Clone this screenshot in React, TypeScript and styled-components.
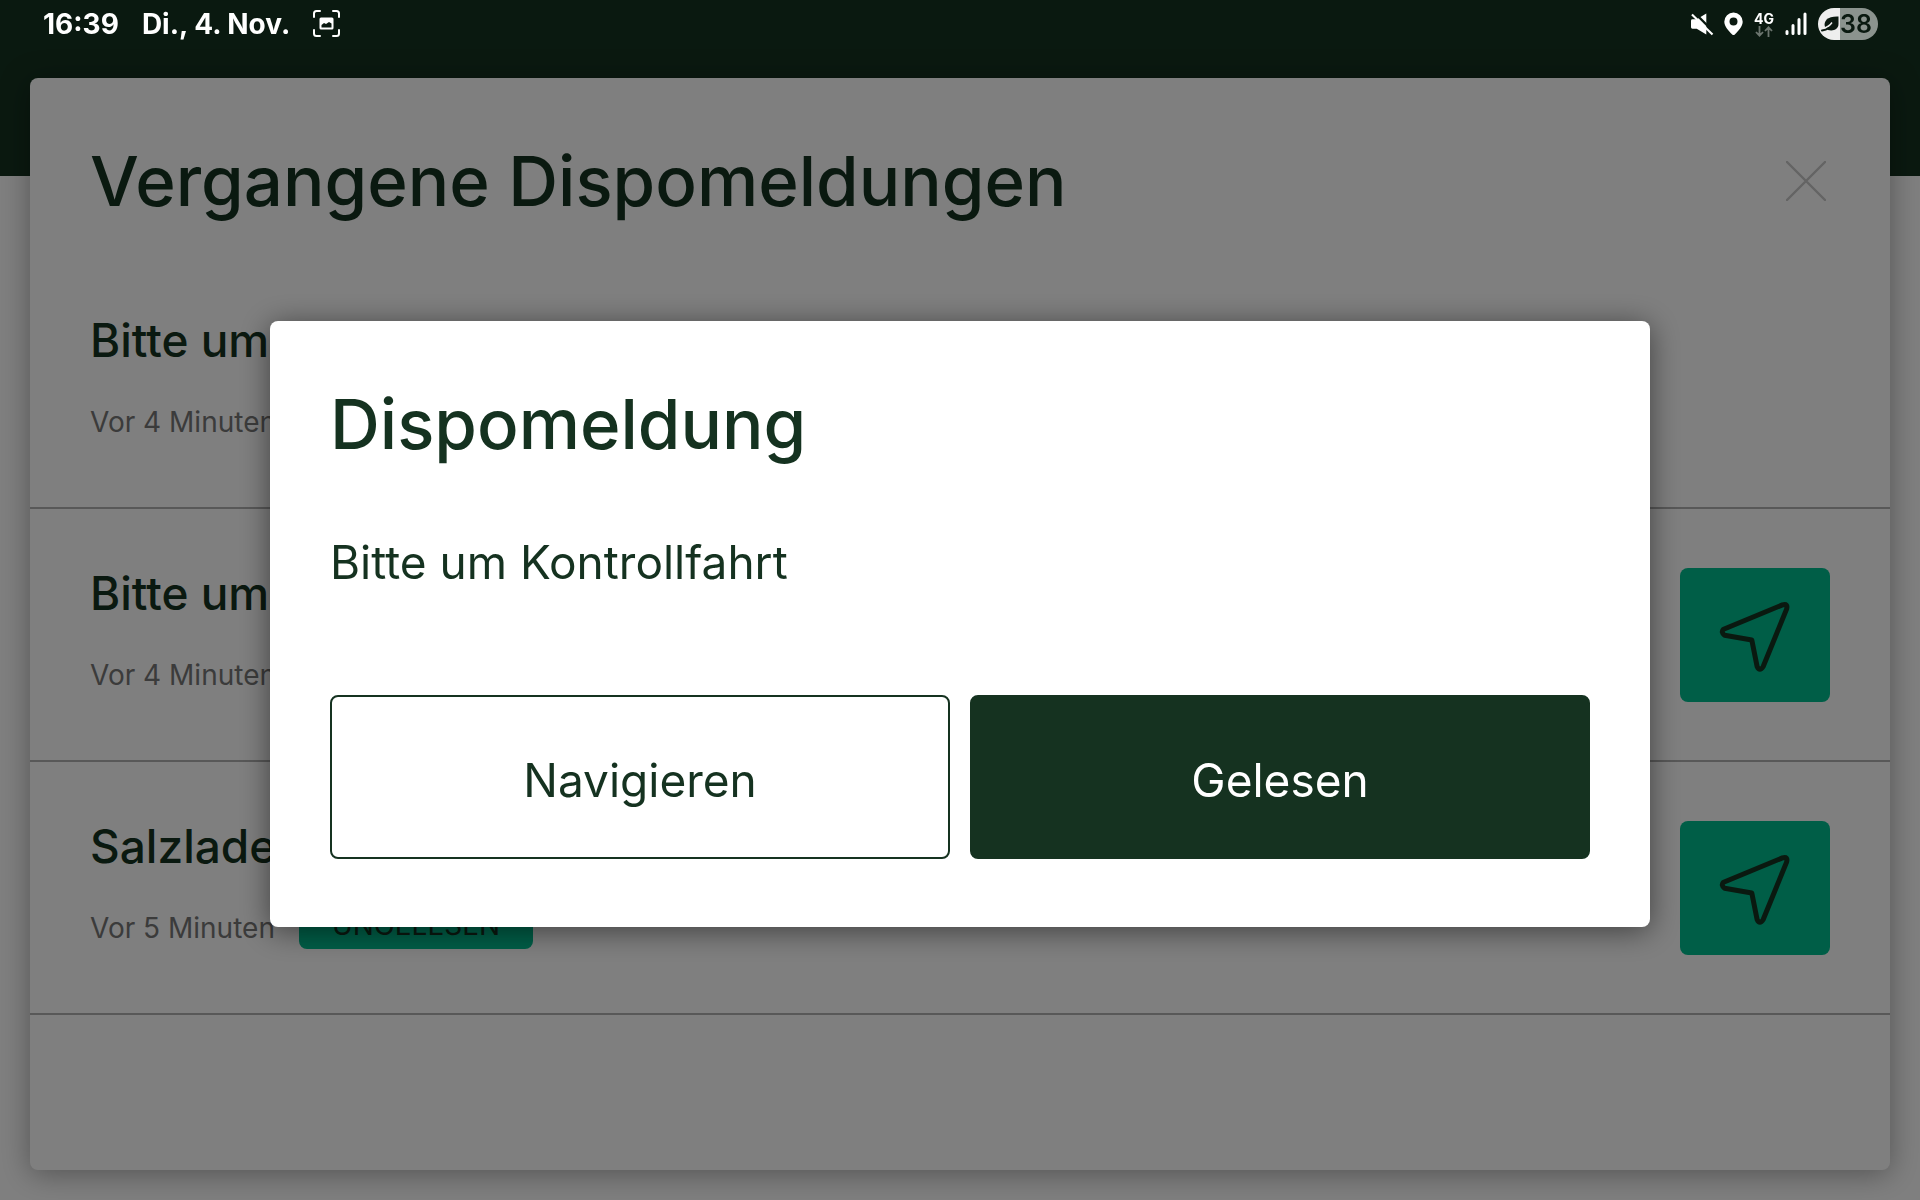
import React from "react";
import styled, { createGlobalStyle } from "styled-components";

const ink = "#153220";
const green = "#00bc8e";

const GlobalStyle = createGlobalStyle`
  *, *::before, *::after { box-sizing: border-box; }
  body {
    margin: 0;
    background: #ffffff;
    color: ${ink};
    font-family: Inter, Roboto, "Liberation Sans", sans-serif;
  }
  h1, h2, h3, p, ul { margin: 0; padding: 0; }
  button { font-family: inherit; color: inherit; cursor: pointer; }
`;

const Screen = styled.div`
  display: flex;
  flex-direction: column;
  min-height: 100vh;
  padding: 78px 30px 30px;
  background: linear-gradient(${ink} 176px, #ffffff 176px);
`;

const Panel = styled.main`
  flex: 1;
  background: #ffffff;
  border-radius: 8px;
  box-shadow: 0 4px 30px rgba(0, 0, 0, 0.35);
`;

const PanelHeader = styled.header`
  display: flex;
  align-items: center;
  justify-content: space-between;
  padding: 61px 60px 33px;
`;

const Title = styled.h1`
  font-size: 69px;
  line-height: 84px;
  font-weight: 500;
`;

const CloseButton = styled.button`
  display: flex;
  padding: 4px;
  border: 0;
  background: none;
  color: #c8c8c8;
`;

const List = styled.ul`
  list-style: none;
`;

const Row = styled.li`
  display: flex;
  align-items: center;
  justify-content: space-between;
  padding: 59px 60px 58px;
  border-bottom: 2px solid #b0b0b0;
`;

const RowText = styled.div`
  display: flex;
  flex-direction: column;
  gap: 30px;
`;

const RowTitle = styled.h2`
  font-size: 46px;
  line-height: 50px;
  font-weight: 500;
`;

const RowMeta = styled.div`
  display: flex;
  align-items: flex-start;
  gap: 24px;
  height: 54px;
`;

const Age = styled.p`
  padding-top: 9px;
  font-size: 28px;
  line-height: 36px;
  color: #777777;
`;

const Badge = styled.span`
  padding: 0 33px;
  border-radius: 8px;
  background: ${green};
  font-size: 28px;
  line-height: 48px;
`;

const NavigateButton = styled.button`
  display: flex;
  align-items: center;
  justify-content: center;
  width: 150px;
  height: 134px;
  border: 0;
  border-radius: 8px;
  background: ${green};
`;

const Overlay = styled.div`
  position: fixed;
  inset: 0;
  display: flex;
  align-items: center;
  justify-content: center;
  padding: 48px 270px 0;
  background: rgba(0, 0, 0, 0.5);
`;

const Dialog = styled.section`
  flex: 1;
  display: flex;
  flex-direction: column;
  padding: 61px 60px 68px;
  border-radius: 8px;
  background: #ffffff;
  box-shadow: 0 4px 30px rgba(0, 0, 0, 0.5);
`;

const Message = styled.p`
  padding: 65px 0 102px;
  font-size: 46px;
  line-height: 62px;
`;

const Actions = styled.div`
  display: flex;
  gap: 20px;
`;

const Action = styled.button<{ $filled?: boolean }>`
  flex: 1;
  height: 164px;
  padding: 6px 0 0;
  border: 2px solid ${ink};
  border-radius: 8px;
  background: ${(p) => (p.$filled ? ink : "#ffffff")};
  color: ${(p) => (p.$filled ? "#ffffff" : ink)};
  font-size: 46px;
  line-height: 56px;
`;

const StatusBar = styled.div`
  position: fixed;
  top: 0;
  left: 0;
  right: 0;
  display: flex;
  align-items: center;
  justify-content: space-between;
  height: 48px;
  padding: 0 42px 0 43px;
  color: #ffffff;
`;

const StatusGroup = styled.div<{ $gap: number }>`
  display: flex;
  align-items: center;
  gap: ${(p) => p.$gap}px;
  font-size: 28px;
  line-height: 32px;
  font-weight: 700;
`;

const Network = styled.div`
  display: flex;
  flex-direction: column;
  align-items: center;
  font-size: 14px;
  line-height: 14px;
  font-weight: 700;
`;

const Battery = styled.div`
  display: flex;
  align-items: center;
  width: 60px;
  height: 32px;
  padding-left: 3px;
  border-radius: 16px;
  background: linear-gradient(90deg, #eeeeee 22px, #8b938e 22px);
  color: #0a1910;
  font-size: 25px;
  font-weight: 600;
`;

const ArrowIcon = () => (
  <svg width="70" height="70" viewBox="0 -2 70 70" overflow="visible" fill="none" stroke="currentColor" strokeWidth="5" strokeLinejoin="round" aria-hidden="true">
    <path d="M3.6 27.2L62.4 2.9Q68.4 1.2 66.5 7.4L43.2 64.5Q39.7 70.2 37.1 64.5L31.8 38L4.6 33.2Q0.5 30 3.6 27.2Z" />
  </svg>
);

const CloseIcon = () => (
  <svg width="40" height="40" viewBox="0 0 40 40" fill="none" stroke="currentColor" strokeWidth="2.4" strokeLinecap="round" aria-hidden="true">
    <path d="M1 1L39 39M39 1L1 39" />
  </svg>
);

const CaptureIcon = () => (
  <svg width="28" height="28" viewBox="0 0 28 28" fill="none" aria-hidden="true">
    <path d="M1 7V3.5Q1 1 3.5 1H7M20 1H23.5Q26 1 26 3.5V7M26 20V23.5Q26 26 23.5 26H20M7 26H3.5Q1 26 1 23.5V20" stroke="#fff" strokeWidth="2" strokeLinecap="round" />
    <rect x="6.5" y="7.5" width="14" height="12" rx="1.5" fill="#fff" />
    <path d="M8.5 17.500V15L11 13L13 14L16 12L18.5 13.500V17.500Z" fill="#0a1910" />
  </svg>
);

const MuteIcon = () => (
  <svg width="22" height="24" viewBox="0 0 23 24" overflow="visible" aria-hidden="true">
    <path d="M0 8.500Q0 7 1.500 7H6L16 1V23L6 17H1.500Q0 17 0 15.500Z" fill="#fff" />
    <path d="M3 -0.500L24.500 21" stroke="#0a1910" strokeWidth="2.400" />
    <path d="M1 2L22.500 23" stroke="#fff" strokeWidth="2.200" />
  </svg>
);

const PinIcon = () => (
  <svg width="19" height="24" viewBox="0 0 19 24" aria-hidden="true">
    <path fillRule="evenodd" d="M9.500 0.500A9.200 9.200 0 0 1 18.700 9.700C18.700 14.500 14 19 10.800 22.500Q9.500 23.700 8.200 22.500C5 19 0.300 14.500 0.300 9.700A9.200 9.200 0 0 1 9.500 0.500ZM9.500 5.500A4 4 0 1 0 9.500 13.500A4 4 0 1 0 9.500 5.500Z" fill="#fff" />
  </svg>
);

const TransferIcon = () => (
  <svg width="18" height="11" viewBox="0 0 18 11" fill="none" stroke="#6c756f" strokeWidth="1.800" aria-hidden="true">
    <path d="M4.500 0V9.500M1 6L4.500 9.700L8 6M13.500 11V1.300M10 5L13.500 1.300L17 5" />
  </svg>
);

const SignalIcon = () => (
  <svg width="22" height="24" viewBox="0 0 22 24" stroke="#fff" strokeWidth="3" strokeLinecap="round" aria-hidden="true">
    <path d="M2 19.500V21.500M8 13.500V21.500M14 7.500V21.500M20 2V21.500" />
  </svg>
);

const LeafIcon = () => (
  <svg width="19" height="18" viewBox="0 0 19 18" aria-hidden="true">
    <path d="M17.500 1.500V9C17.500 14 12.500 16.500 7 15L4 12C2 6 7 1 17.500 1.500Z" fill="#0a1910" />
    <path d="M2 13.500Q8 12 11 7.500" stroke="#eee" strokeWidth="1.400" fill="none" />
    <path d="M1 15.500Q5 15 8 13" stroke="#0a1910" strokeWidth="2" strokeLinecap="round" fill="none" />
  </svg>
);

const messages = [
  { title: "Bitte um", age: "Vor 4 Minuten", unread: false, target: false },
  { title: "Bitte um", age: "Vor 4 Minuten", unread: false, target: true },
  { title: "Salzlade", age: "Vor 5 Minuten", unread: true, target: true },
];

export default function App() {
  return (
    <>
      <GlobalStyle />
      <Screen>
        <Panel>
          <PanelHeader>
            <Title>Vergangene Dispomeldungen</Title>
            <CloseButton aria-label="Schließen">
              <CloseIcon />
            </CloseButton>
          </PanelHeader>
          <List>
            {messages.map((m, i) => (
              <Row key={i}>
                <RowText>
                  <RowTitle>{m.title}</RowTitle>
                  <RowMeta>
                    <Age>{m.age}</Age>
                    {m.unread && <Badge>UNGELESEN</Badge>}
                  </RowMeta>
                </RowText>
                {m.target && (
                  <NavigateButton aria-label="Navigieren">
                    <ArrowIcon />
                  </NavigateButton>
                )}
              </Row>
            ))}
          </List>
        </Panel>
      </Screen>
      <Overlay>
        <Dialog role="dialog" aria-modal="true" aria-labelledby="dialog-title">
          <Title as="h2" id="dialog-title">Dispomeldung</Title>
          <Message>Bitte um Kontrollfahrt</Message>
          <Actions>
            <Action>Navigieren</Action>
            <Action $filled>Gelesen</Action>
          </Actions>
        </Dialog>
      </Overlay>
      <StatusBar>
        <StatusGroup $gap={23}>
          <span>16:39</span>
          <span>Di., 4. Nov.</span>
          <CaptureIcon />
        </StatusGroup>
        <StatusGroup $gap={11}>
          <MuteIcon />
          <PinIcon />
          <Network>
            4G
            <TransferIcon />
          </Network>
          <SignalIcon />
          <Battery>
            <LeafIcon />
            38
          </Battery>
        </StatusGroup>
      </StatusBar>
    </>
  );
}
